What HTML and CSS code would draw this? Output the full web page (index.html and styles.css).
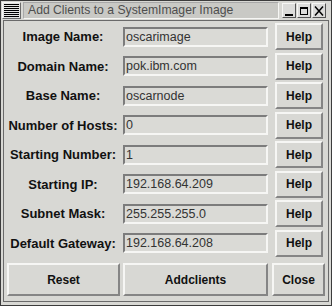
FILE: index.html
```html
<!DOCTYPE html>
<html lang="en">
<head>
  <meta charset="UTF-8">
  <title>Add Clients to a SystemImager Image</title>
  <link rel="stylesheet" href="styles.css">
</head>
<body>
<div class="window">
  <div class="titlebar">
    <div class="menu-btn">
      <svg width="17" height="15" viewBox="0 0 17 15">
        <g stroke="#000" stroke-width="1">
          <line x1="1" y1="1.5" x2="16" y2="1.5"/>
          <line x1="1" y1="3.5" x2="16" y2="3.5"/>
          <line x1="1" y1="5.5" x2="16" y2="5.5"/>
          <line x1="1" y1="7.5" x2="16" y2="7.5"/>
          <line x1="1" y1="9.5" x2="16" y2="9.5"/>
          <line x1="1" y1="11.5" x2="16" y2="11.5"/>
          <line x1="1" y1="13.5" x2="16" y2="13.5"/>
        </g>
      </svg>
    </div>
    <div class="title">Add Clients to a SystemImager Image</div>
    <div class="wm-buttons">
      <span class="wm-btn">
        <svg width="12" height="12" viewBox="0 0 12 12"><rect x="2" y="9" width="8" height="2" fill="#000"/></svg>
      </span>
      <span class="wm-btn">
        <svg width="12" height="12" viewBox="0 0 12 12"><rect x="2.5" y="2.5" width="7" height="7" fill="none" stroke="#000"/><rect x="2" y="2" width="8" height="2" fill="#000"/></svg>
      </span>
      <span class="wm-btn">
        <svg width="12" height="12" viewBox="0 0 12 12"><path d="M2 1.5 L10 10.5 M10 1.5 L2 10.5" stroke="#000" stroke-width="1.5"/></svg>
      </span>
    </div>
  </div>

  <div class="client-area">
    <div class="form">
      <label class="field-label">Image Name:</label>
      <div class="entry">oscarimage</div>
      <button class="help-btn">Help</button>

      <label class="field-label">Domain Name:</label>
      <div class="entry">pok.ibm.com</div>
      <button class="help-btn">Help</button>

      <label class="field-label">Base Name:</label>
      <div class="entry">oscarnode</div>
      <button class="help-btn">Help</button>

      <label class="field-label">Number of Hosts:</label>
      <div class="entry">0</div>
      <button class="help-btn">Help</button>

      <label class="field-label">Starting Number:</label>
      <div class="entry">1</div>
      <button class="help-btn">Help</button>

      <label class="field-label">Starting IP:</label>
      <div class="entry">192.168.64.209</div>
      <button class="help-btn">Help</button>

      <label class="field-label">Subnet Mask:</label>
      <div class="entry">255.255.255.0</div>
      <button class="help-btn">Help</button>

      <label class="field-label">Default Gateway:</label>
      <div class="entry">192.168.64.208</div>
      <button class="help-btn">Help</button>
    </div>

    <div class="actions">
      <button class="action-btn reset">Reset</button>
      <button class="action-btn add">Addclients</button>
      <button class="action-btn close">Close</button>
    </div>
  </div>
</div>
</body>
</html>
```

FILE: styles.css
```css
:root {
  --bg: #d8d8d4;
  --light: #f6f6f4;
  --shade: #858585;
  --dark: #3c3c3c;
}

* {
  box-sizing: border-box;
  margin: 0;
  padding: 0;
}

body {
  font-family: 'Liberation Sans', Arial, sans-serif;
  background-color: var(--bg);
  width: 332px;
  height: 306px;
  overflow: hidden;
}

.window {
  width: 332px;
  height: 306px;
  border: 1px solid var(--dark);
  background-color: var(--bg);
  display: flex;
  flex-direction: column;
}

/* window manager title bar */
.titlebar {
  height: 19px;
  display: flex;
  align-items: center;
  padding: 0 5px 0 1px;
}

.menu-btn {
  width: 19px;
  height: 17px;
  background-color: #e4e4e2;
  border: 1px solid;
  border-color: var(--light) #6a6a6a #6a6a6a var(--light);
  display: flex;
  align-items: center;
  justify-content: center;
}

.title {
  flex: 1;
  height: 17px;
  margin-left: 2px;
  padding-left: 4px;
  background-color: #c9c9c5;
  border: 1px solid;
  border-color: #a8a8a8 var(--light) var(--light) #a8a8a8;
  color: #4e4e4e;
  font-size: 12.2px;
  line-height: 15px;
  white-space: nowrap;
  overflow: hidden;
}

.wm-buttons {
  display: flex;
  gap: 1px;
  margin-left: 3px;
}

.wm-btn {
  width: 14px;
  height: 15px;
  background-color: #dcdcda;
  border: 1px solid;
  border-color: var(--light) #555 #555 var(--light);
  display: flex;
  align-items: center;
  justify-content: center;
}

/* dialog body */
.client-area {
  flex: 1;
  margin: 0 2px 3px;
  border: 1px solid #6a6a6a;
  display: flex;
  flex-direction: column;
}

.form {
  display: grid;
  grid-template-columns: 116px 145px 53px;
  grid-auto-rows: 29.5px;
  column-gap: 2px;
  align-items: center;
  padding: 1px 0 0 1px;
}

.field-label {
  text-align: center;
  font-weight: bold;
  font-size: 13px;
  color: #111;
  white-space: nowrap;
}

.entry {
  height: 20px;
  border: 2px solid;
  border-color: #7c7c7c var(--light) var(--light) #7c7c7c;
  background-color: #dadad6;
  padding-left: 1px;
  font-size: 12.5px;
  line-height: 16px;
  color: #333;
}

.help-btn,
.action-btn {
  font-family: 'Liberation Sans', Arial, sans-serif;
  font-weight: bold;
  font-size: 12px;
  color: #111;
  background-color: var(--bg);
  border: 2px solid;
  border-color: var(--light) var(--shade) var(--shade) var(--light);
}

.help-btn {
  justify-self: end;
  width: 48px;
  height: 27px;
}

.actions {
  display: flex;
  margin-top: 5px;
  padding-left: 3px;
}

.action-btn {
  height: 33px;
}

.reset {
  width: 113px;
}

.add {
  width: 145px;
  margin-left: 3px;
}

.close {
  width: 53px;
  margin-left: 4px;
}
```
